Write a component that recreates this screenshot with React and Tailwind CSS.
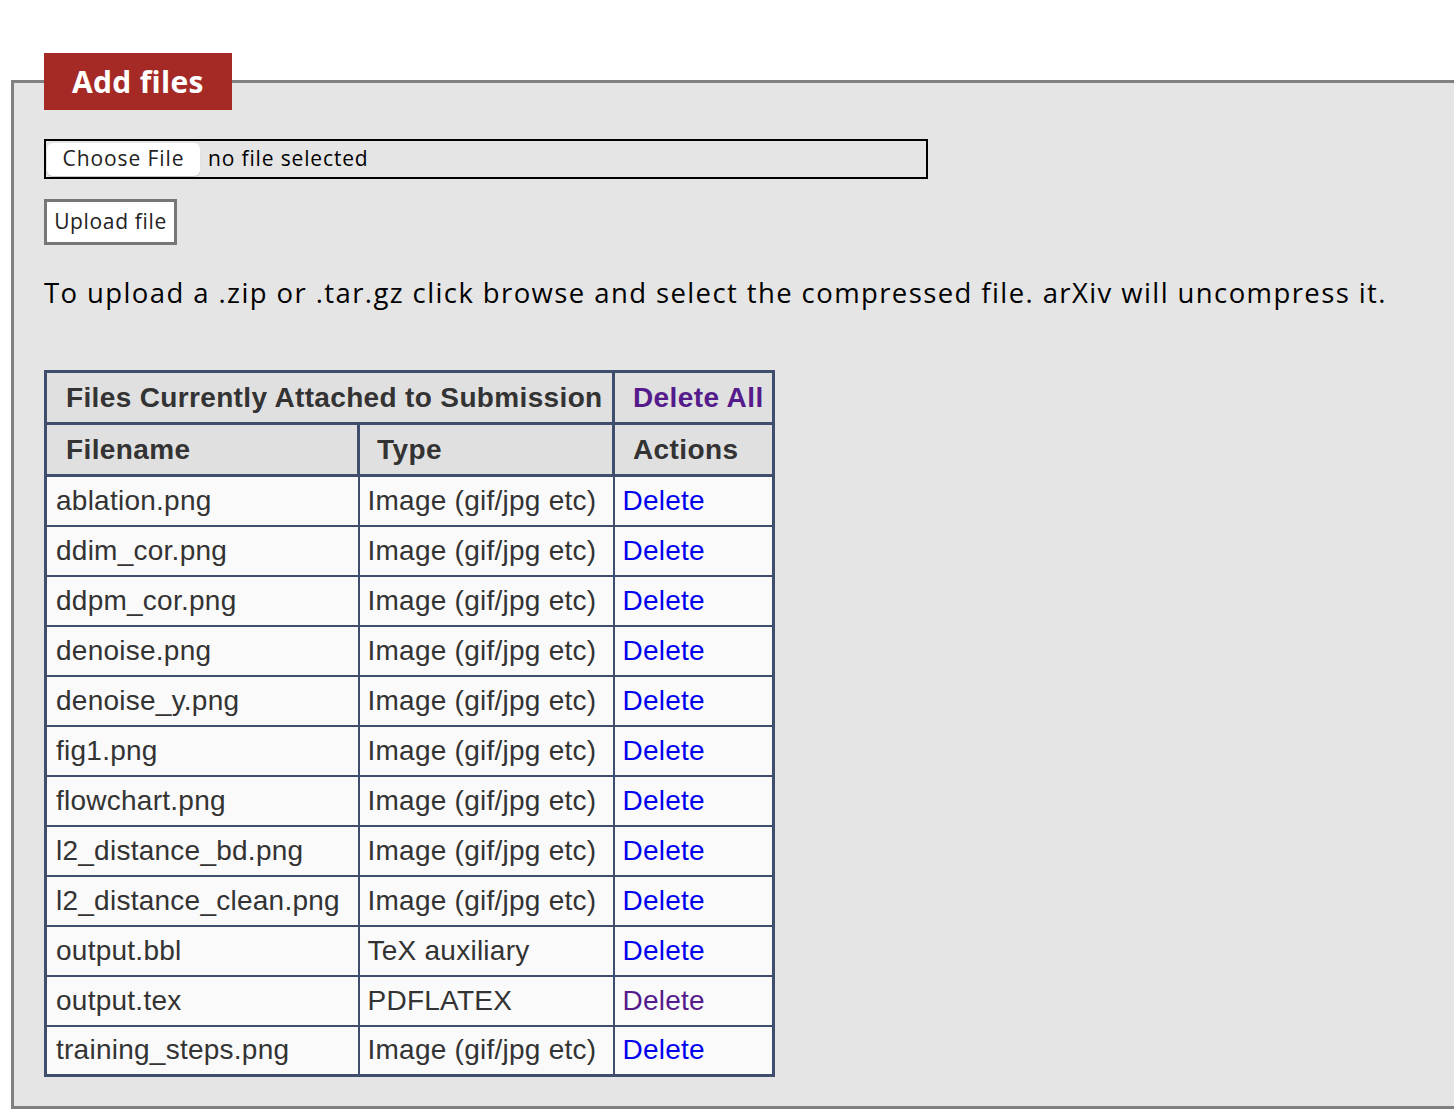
import React from "react";

const rows = [
  ["ablation.png", "Image (gif/jpg etc)", false],
  ["ddim_cor.png", "Image (gif/jpg etc)", false],
  ["ddpm_cor.png", "Image (gif/jpg etc)", false],
  ["denoise.png", "Image (gif/jpg etc)", false],
  ["denoise_y.png", "Image (gif/jpg etc)", false],
  ["fig1.png", "Image (gif/jpg etc)", false],
  ["flowchart.png", "Image (gif/jpg etc)", false],
  ["l2_distance_bd.png", "Image (gif/jpg etc)", false],
  ["l2_distance_clean.png", "Image (gif/jpg etc)", false],
  ["output.bbl", "TeX auxiliary", false],
  ["output.tex", "PDFLATEX", true],
  ["training_steps.png", "Image (gif/jpg etc)", false],
];

const lucida = { fontFamily: '"Open Sans", "DejaVu Sans", sans-serif' };

export default function App() {
  return (
    <div className="w-[1454px] h-[1114px] overflow-hidden bg-white">
      <fieldset
        className="mt-[53px] ml-[11px] w-[1470px] border-[3px] border-[#808080] bg-[#e5e5e5] pl-[30px] pb-[29px]"
        style={lucida}
      >
        <legend className="bg-[#a52a26] text-white font-bold text-[30px] tracking-[0.3px] leading-[57px] h-[57px] px-[28px]">
          Add files
        </legend>
        <div className="mt-[29px] w-[884px] h-[40px] border-2 border-black flex items-center pl-[1px]">
          <div className="h-[33px] w-[153px] bg-white rounded-[6px] shadow-[0_1px_1px_rgba(0,0,0,0.15)] flex items-center justify-center text-[21px] tracking-[0.9px] text-[#222]">
            Choose File
          </div>
          <span className="ml-[8px] text-[21px] tracking-[0.85px] text-black">no file selected</span>
        </div>
        <div className="mt-[20px] w-[133px] h-[46px] border-[3px] border-[#767676] bg-white flex items-center justify-center text-[21px] tracking-[0.65px] text-[#222]">
          Upload file
        </div>
        <p className="mt-[28px] text-[27.5px] tracking-[1.4px] leading-[40px] text-black">
          To upload a .zip or .tar.gz click browse and select the compressed file. arXiv will uncompress it.
        </p>
        <table
          className="mt-[57px] border-collapse border-[3px] border-[#3f4e6d] text-[28px] text-[#333]"
          style={{ fontFamily: '"Liberation Sans", Arial, sans-serif' }}
        >
          <thead>
            <tr className="h-[52px] bg-[#e0e0e0]">
              <th colSpan={2} className="border-[3px] border-[#3f4e6d] text-left font-bold whitespace-nowrap tracking-[0.35px] pl-[19px] pr-[4px]">
                Files Currently Attached to Submission
              </th>
              <th className="border-[3px] border-[#3f4e6d] text-left font-bold whitespace-nowrap tracking-[0.4px] pl-[18px] pr-[8px] text-[#551a8b]">
                Delete All
              </th>
            </tr>
            <tr className="h-[52px] bg-[#e0e0e0]">
              <th className="border-[3px] border-[#3f4e6d] text-left font-bold tracking-[0.4px] pl-[19px] w-[313px]">Filename</th>
              <th className="border-[3px] border-[#3f4e6d] text-left font-bold tracking-[0.4px] pl-[17px] w-[255px]">Type</th>
              <th className="border-[3px] border-[#3f4e6d] text-left font-bold tracking-[0.4px] pl-[18px]">Actions</th>
            </tr>
          </thead>
          <tbody>
            {rows.map(([name, type, visited]) => (
              <tr key={name} className="h-[50px] bg-[#fafafa]">
                <td className="border-2 border-[#3f4e6d] pl-[9px] pr-[6px] whitespace-nowrap tracking-[0.25px]">{name}</td>
                <td className="border-2 border-[#3f4e6d] pl-[8px] pr-[6px] whitespace-nowrap tracking-[0.25px]">{type}</td>
                <td className="border-2 border-[#3f4e6d] pl-[8px] tracking-[0.25px]">
                  <a href="#" className={visited ? "text-[#551a8b]" : "text-[#0000ee]"}>
                    Delete
                  </a>
                </td>
              </tr>
            ))}
          </tbody>
        </table>
      </fieldset>
    </div>
  );
}
